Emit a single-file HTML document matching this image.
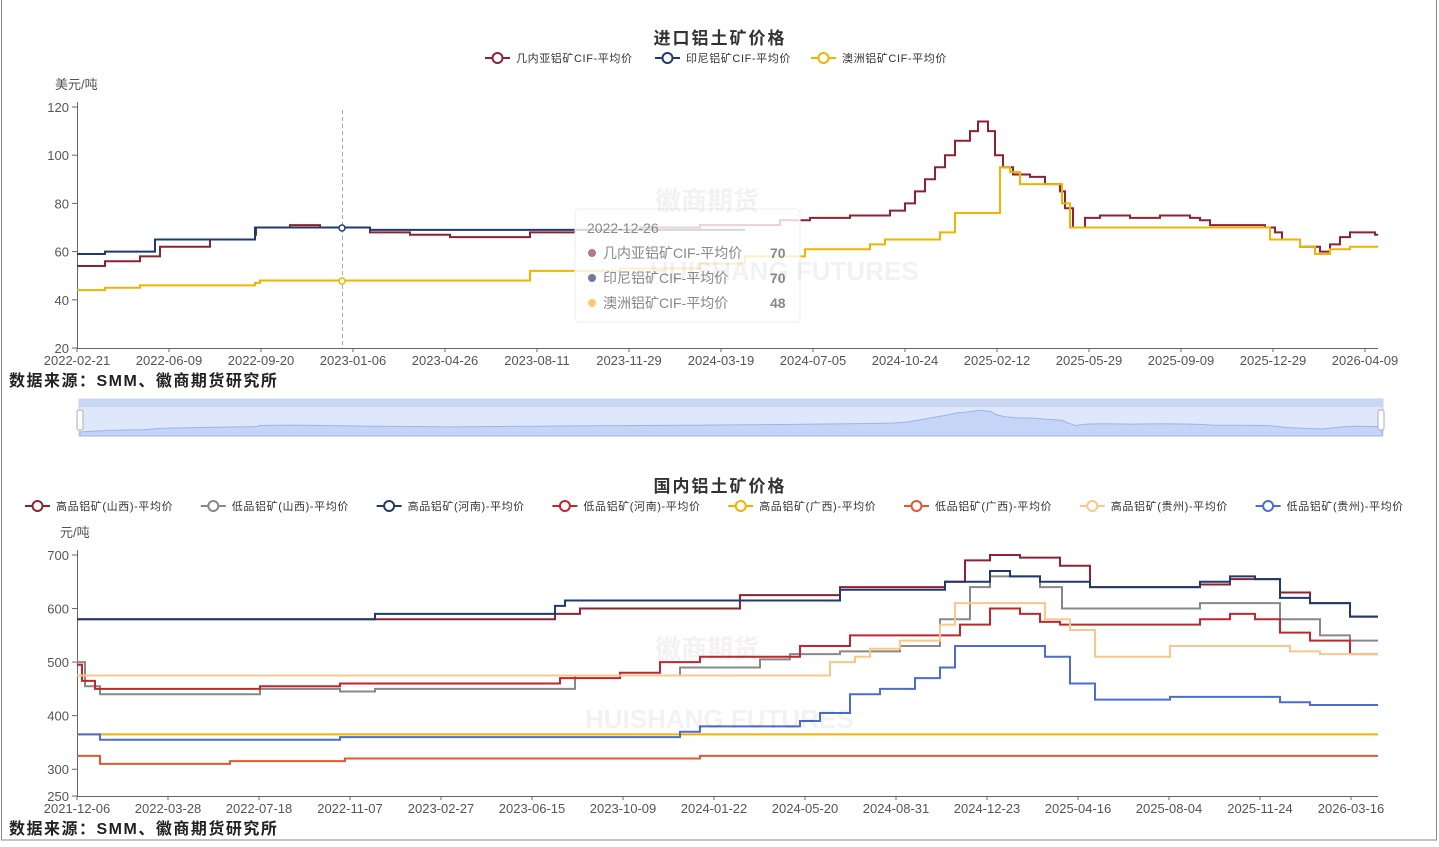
<!DOCTYPE html><html><head><meta charset="utf-8"><style>
body{margin:0;width:1439px;height:842px;background:#fff;overflow:hidden;font-family:"Liberation Sans","Noto Sans CJK SC",sans-serif}
svg text{font-family:"Liberation Sans","Noto Sans CJK SC",sans-serif}
</style></head><body>
<svg id="s" width="1439" height="842" xmlns="http://www.w3.org/2000/svg">
<rect x="1.5" y="-2" width="1435" height="842" fill="none" stroke="#888" stroke-width="1"/>
<g font-size="17" font-weight="bold" fill="#333" text-anchor="middle" letter-spacing="2">
<text x="720" y="44">进口铝土矿价格</text>
<text x="720" y="492">国内铝土矿价格</text></g>
<g id="leg1" font-size="11" fill="#333" letter-spacing="0.6"></g>
<g font-size="13" fill="#555"><text x="55" y="89">美元/吨</text><text x="60" y="537">元/吨</text></g>
<g id="ax"></g>
<g id="lines"></g>
<g font-size="16" font-weight="bold" fill="#222" letter-spacing="1.5"><text x="9" y="386">数据来源：SMM、徽商期货研究所</text><text x="9" y="834">数据来源：SMM、徽商期货研究所</text></g>
<rect x="79" y="399" width="1304" height="37" fill="#dfe8fb" stroke="#c5d2ee"/>
<rect x="79" y="399" width="1304" height="8" fill="#c9d6f2"/>
<path id="mini" fill="#c4d5f7" stroke="#9cb4ea" d=""/>
<rect x="77" y="410" width="6" height="20" rx="2" fill="#fff" stroke="#aab"/><rect x="1378" y="410" width="6" height="20" rx="2" fill="#fff" stroke="#aab"/>
<line x1="342.5" y1="110" x2="342.5" y2="348" stroke="#aaa" stroke-dasharray="4,3"/>
<circle cx="342" cy="228" r="3" fill="#fff" stroke="#1f3a6e" stroke-width="1.5"/><circle cx="342" cy="281" r="3" fill="#fff" stroke="#f0b400" stroke-width="1.5"/>
<rect x="575" y="209" width="225" height="113" rx="4" fill="#fff" fill-opacity="0.8" stroke="#eee"/>
<g font-size="14" fill="#888"><text x="587" y="233">2022-12-26</text>
<circle cx="592" cy="253" r="4" fill="#b57a84"/><text x="603" y="258">几内亚铝矿CIF-平均价</text><text x="770" y="258" font-weight="bold">70</text>
<circle cx="592" cy="278" r="4" fill="#6e7c9a"/><text x="603" y="283">印尼铝矿CIF-平均价</text><text x="770" y="283" font-weight="bold">70</text>
<circle cx="592" cy="303" r="4" fill="#f5cf66"/><text x="603" y="308">澳洲铝矿CIF-平均价</text><text x="770" y="308" font-weight="bold">48</text></g>
<g font-size="26" font-weight="bold" fill="#000" fill-opacity="0.05"><text x="655" y="210">徽商期货</text><text x="650" y="280">HUISHANG FUTURES</text><text x="655" y="658">徽商期货</text><text x="585" y="728">HUISHANG FUTURES</text></g>
</svg>
<script>
var NS="http://www.w3.org/2000/svg",s=document.getElementById('s');
function el(t,a,p,txt){var e=document.createElementNS(NS,t);for(var k in a)e.setAttribute(k,a[k]);if(txt)e.textContent=txt;(p||s).appendChild(e);return e}
var ax=document.getElementById('ax'),ln=document.getElementById('lines'),lg=document.getElementById('leg1');
function axis(y0,y1,ticks,yf,dates,x0,step){
 el('line',{x1:77.5,y1:y0-5,x2:77.5,y2:y1,stroke:'#666'},ax);
 el('line',{x1:77,y1:y1+.5,x2:1378,y2:y1+.5,stroke:'#666'},ax);
 ticks.forEach(function(v){var y=yf(v);el('line',{x1:72,y1:y,x2:77,y2:y,stroke:'#666'},ax);el('text',{x:69,y:y+5,'font-size':13,fill:'#555','text-anchor':'end'},ax,v)});
 dates.forEach(function(d,i){var x=x0+i*step;el('line',{x1:x,y1:y1,x2:x,y2:y1+4,stroke:'#666'},ax);el('text',{x:x,y:y1+17,'font-size':13,fill:'#555','text-anchor':'middle'},ax,d)});
}
var y1f=function(v){return 348-(v-20)*2.41},y2f=function(v){return 796-(v-250)*0.5356};
axis(107,348,[20,40,60,80,100,120],y1f,['2022-02-21','2022-06-09','2022-09-20','2023-01-06','2023-04-26','2023-08-11','2023-11-29','2024-03-19','2024-07-05','2024-10-24','2025-02-12','2025-05-29','2025-09-09','2025-12-29','2026-04-09'],77,92);
axis(555,796,[250,300,400,500,600,700],y2f,['2021-12-06','2022-03-28','2022-07-18','2022-11-07','2023-02-27','2023-06-15','2023-10-09','2024-01-22','2024-05-20','2024-08-31','2024-12-23','2025-04-16','2025-08-04','2025-11-24','2026-03-16'],77,91);
function step(pts,yf,col,end){var d='M77 '+yf(pts[0][1]);for(var i=1;i<pts.length;i++){d+=' H'+pts[i][0]+' V'+yf(pts[i][1])}d+=' H'+(end||1378);el('path',{d:d,fill:'none',stroke:col,'stroke-width':2},ln)}
var G=[[0,54],[105,56],[140,58],[160,62],[210,65],[255,67],[256,70],[290,71],[320,70],[370,68],[410,67],[450,66],[530,68],[575,69],[640,70],[700,71],[780,73],[810,74],[850,75],[890,77],[905,80],[915,85],[925,90],[935,95],[945,100],[955,106],[970,110],[978,114],[988,110],[995,100],[1003,95],[1013,92],[1030,91],[1045,88],[1060,85],[1065,78],[1073,70],[1085,74],[1100,75],[1130,74],[1160,75],[1190,74],[1200,73],[1210,71],[1265,70],[1275,68],[1282,65],[1300,62],[1320,60],[1330,63],[1340,66],[1350,68],[1375,67]];
step(G,y1f,'#8e2233');
step([[0,59],[105,60],[155,65],[255,70],[370,69]],y1f,'#1f3a6e',745);
step([[0,44],[105,45],[140,46],[255,47],[260,48],[530,52],[620,53],[700,55],[745,58],[805,61],[870,63],[885,65],[940,68],[955,76],[1000,95],[1010,93],[1020,88],[1062,80],[1070,70],[1270,65],[1300,62],[1315,59],[1330,61],[1350,62]],y1f,'#f0b400');
var md='M80 436 L80 432';G.forEach(function(p){if(p[0]>0){var x=80+(p[0]-77)*1300/1301;md+=' L'+x+' '+(436-(p[1]-40)*0.35)}});md+=' L1382 431 L1382 436Z';document.getElementById('mini').setAttribute('d',md);
var S2=[
['#8e2233',[[0,580],[555,590],[580,600],[740,625],[840,640],[945,650],[965,690],[990,700],[1020,695],[1060,680],[1090,640],[1200,645],[1230,655],[1280,630],[1310,610],[1350,585]]],
['#888',[[0,500],[85,455],[100,440],[260,450],[340,445],[375,450],[575,475],[680,490],[760,505],[790,515],[840,520],[900,530],[940,580],[970,640],[990,660],[1040,640],[1062,600],[1200,610],[1280,580],[1320,550],[1350,540]]],
['#1f3a6e',[[0,580],[375,590],[555,605],[565,615],[840,635],[945,650],[990,670],[1010,660],[1040,650],[1090,640],[1200,650],[1230,660],[1255,655],[1280,620],[1310,610],[1350,585]]],
['#c0272d',[[0,495],[82,465],[95,450],[260,455],[340,460],[560,470],[620,480],[660,500],[700,510],[800,530],[850,550],[960,570],[990,600],[1020,590],[1040,575],[1060,570],[1200,580],[1230,590],[1255,580],[1280,555],[1310,540],[1350,515]]],
['#f5b000',[[0,365]]],
['#e05a30',[[0,325],[100,310],[230,315],[345,320],[700,325]]],
['#f8c88a',[[0,475],[830,500],[855,510],[870,525],[900,540],[940,570],[955,610],[1045,580],[1070,560],[1095,510],[1170,530],[1290,520],[1320,515]]],
['#4a6cd4',[[0,365],[100,355],[340,360],[680,370],[700,380],[800,390],[820,405],[850,440],[880,450],[915,470],[940,490],[955,530],[1045,510],[1070,460],[1095,430],[1170,435],[1280,425],[1310,420]]]];
S2.forEach(function(a){step(a[1],y2f,a[0])});
function leg(x,y,col,t){el('line',{x1:x,y1:y,x2:x+25,y2:y,stroke:col,'stroke-width':2},lg);el('circle',{cx:x+12.5,cy:y,r:5,fill:'#fff',stroke:col,'stroke-width':2},lg);el('text',{x:x+31,y:y+4},lg,t)}
leg(485,58,'#8e2233','几内亚铝矿CIF-平均价');leg(655,58,'#1f3a6e','印尼铝矿CIF-平均价');leg(811,58,'#f0b400','澳洲铝矿CIF-平均价');
var n2=['高品铝矿(山西)-平均价','低品铝矿(山西)-平均价','高品铝矿(河南)-平均价','低品铝矿(河南)-平均价','高品铝矿(广西)-平均价','低品铝矿(广西)-平均价','高品铝矿(贵州)-平均价','低品铝矿(贵州)-平均价'];
n2.forEach(function(t,i){leg(25+i*175.8,506,S2[i][0],t)});
</script>
</body></html>
